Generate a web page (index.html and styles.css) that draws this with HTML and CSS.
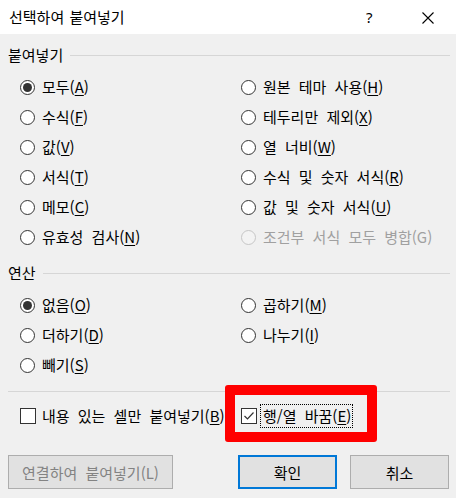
FILE: index.html
```html
<!DOCTYPE html>
<html lang="ko">
<head>
<meta charset="utf-8">
<link rel="stylesheet" href="styles.css">
</head>
<body>
<div class="dialog">
  <div class="titlebar">
    <span class="title">선택하여 붙여넣기</span>
    <span class="help">?</span>
    <svg class="close" width="12" height="12" viewBox="0 0 12 12"><path d="M0.5 0.5 L11.5 11.5 M11.5 0.5 L0.5 11.5" stroke="#000" stroke-width="1.1" fill="none"/></svg>
  </div>
  <div class="body">
    <div class="group-head"><span>붙여넣기</span><i class="rule"></i></div>
    <div class="grid six">
      <label class="opt"><span class="radio on"></span><span>모두(<u>A</u>)</span></label>
      <label class="opt"><span class="radio"></span><span>원본 테마 사용(<u>H</u>)</span></label>
      <label class="opt"><span class="radio"></span><span>수식(<u>F</u>)</span></label>
      <label class="opt"><span class="radio"></span><span>테두리만 제외(<u>X</u>)</span></label>
      <label class="opt"><span class="radio"></span><span>값(<u>V</u>)</span></label>
      <label class="opt"><span class="radio"></span><span>열 너비(<u>W</u>)</span></label>
      <label class="opt"><span class="radio"></span><span>서식(<u>T</u>)</span></label>
      <label class="opt"><span class="radio"></span><span>수식 및 숫자 서식(<u>R</u>)</span></label>
      <label class="opt"><span class="radio"></span><span>메모(<u>C</u>)</span></label>
      <label class="opt"><span class="radio"></span><span>값 및 숫자 서식(<u>U</u>)</span></label>
      <label class="opt"><span class="radio"></span><span>유효성 검사(<u>N</u>)</span></label>
      <label class="opt disabled"><span class="radio"></span><span>조건부 서식 모두 병합(G)</span></label>
    </div>
    <div class="group-head second"><span>연산</span><i class="rule"></i></div>
    <div class="grid three">
      <label class="opt"><span class="radio on"></span><span>없음(<u>O</u>)</span></label>
      <label class="opt"><span class="radio"></span><span>곱하기(<u>M</u>)</span></label>
      <label class="opt"><span class="radio"></span><span>더하기(<u>D</u>)</span></label>
      <label class="opt"><span class="radio"></span><span>나누기(<u>I</u>)</span></label>
      <label class="opt"><span class="radio"></span><span>빼기(<u>S</u>)</span></label>
    </div>
    <div class="separator"></div>
    <div class="checks">
      <label class="chk"><span class="box"></span><span>내용 있는 셀만 붙여넣기(<u>B</u>)</span></label>
      <label class="chk marked"><span class="box"><svg width="14" height="14" viewBox="0 0 14 14"><path d="M2.5 7 L5.5 10 L11.5 3.5" stroke="#333" stroke-width="1.2" fill="none"/></svg></span><span class="focus"><span>행/열 바꿈(<u>E</u>)</span></span><i class="highlight"></i></label>
    </div>
    <div class="buttons">
      <button class="btn link" disabled>연결하여 붙여넣기(L)</button>
      <span class="spacer"></span>
      <button class="btn primary">확인</button>
      <button class="btn">취소</button>
    </div>
  </div>
</div>
</body>
</html>
```

FILE: styles.css
```css
* { box-sizing: border-box; }
html, body { margin: 0; padding: 0; }
body {
  width: 456px;
  height: 498px;
  background: #f0f0f0;
  font-family: "Noto Sans CJK KR", "Noto Sans", sans-serif;
  font-size: 15px;
  line-height: 20px;
  color: #000;
  overflow: hidden;
  word-spacing: 4px;
}
.dialog { width: 456px; height: 498px; display: flex; flex-direction: column; }
.titlebar {
  height: 34px;
  background: #fff;
  display: flex;
  align-items: center;
  padding-left: 9px;
}
.title { flex: 1; word-spacing: 1px; }
.help { width: 8px; margin-right: 48px; font-family: "Noto Sans", sans-serif; font-size: 15px; }
.close { margin-right: 22px; margin-top: 1px; }

.body { padding: 11px 6px 0 8px; display: flex; flex-direction: column; }
.group-head { display: flex; align-items: center; height: 20px; gap: 7px; }
.group-head.second { margin-top: 11px; }
.rule { flex: 1; height: 1px; background: #d6d6d6; display: block; margin-top: 1px; }

.grid {
  display: grid;
  grid-template-columns: 221px 1fr;
  grid-auto-rows: 30px;
  padding-left: 12px;
  margin-top: 7px;
}
.opt { display: flex; align-items: center; gap: 7px; white-space: nowrap; }
.opt.disabled { color: #a0a0a0; }
.radio {
  width: 15px; height: 15px;
  border: 1px solid #333;
  border-radius: 50%;
  background: #fff;
  display: flex; align-items: center; justify-content: center;
  flex: none;
}
.radio.on::after {
  content: "";
  width: 9px; height: 9px;
  border-radius: 50%;
  background: #333;
}
.opt.disabled .radio { border-color: #c6c6c6; background: #f3f3f3; }
u { text-decoration: underline; text-underline-offset: 2px; text-decoration-thickness: 1px; }

.separator { height: 1px; background: #d6d6d6; margin-top: 11px; }

.checks {
  display: grid;
  grid-template-columns: 221px 1fr;
  padding-left: 12px;
  margin-top: 12px;
  height: 24px;
}
.chk { display: flex; align-items: center; gap: 6px; white-space: nowrap; position: relative; }
.box {
  width: 16px; height: 16px;
  border: 1px solid #333;
  background: #fff;
  display: flex; align-items: center; justify-content: center;
  flex: none;
}
.chk.marked { gap: 3px; }
.focus {
  border: 1px dotted #000;
  padding: 1px 1px 1px 2px;
  height: 24px;
  display: flex; align-items: center;
}
.highlight {
  position: absolute;
  left: -16px;
  top: -19px;
  width: 152px;
  height: 57px;
  border: 10px solid #ff0000;
  border-radius: 3px;
  pointer-events: none;
}

.buttons { display: flex; margin-top: 27px; gap: 13px; padding-right: 1px; }
.spacer { flex: 1; }
.btn {
  height: 34px;
  background: #e1e1e1;
  border: 1px solid #adadad;
  font-family: inherit;
  font-size: 15px;
  word-spacing: 4px;
  color: #000;
  padding: 0;
  width: 99px;
}
.btn.link { width: 165px; color: #838383; }
.btn.primary { border: 2px solid #0078d7; }
```
